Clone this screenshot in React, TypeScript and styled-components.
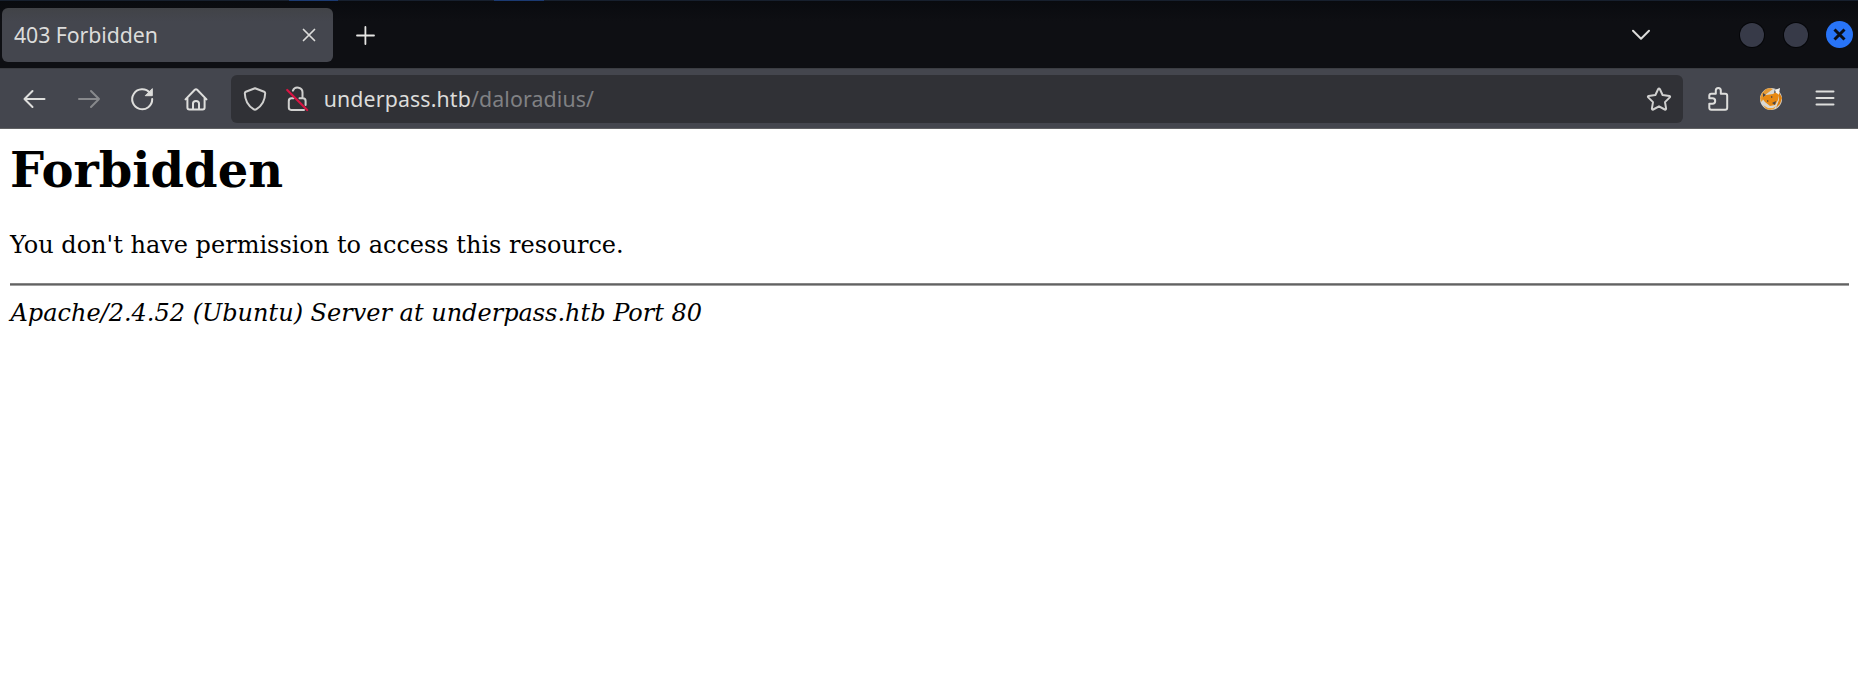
import React from 'react';
import styled, { createGlobalStyle } from 'styled-components';

const GlobalStyle = createGlobalStyle`
  * { box-sizing: border-box; }
  body { margin: 0; background: #fff; overflow: hidden; }
`;

const Window = styled.div`
  display: flex;
  flex-direction: column;
  height: 685px;
  font-family: 'Noto Sans', sans-serif;
`;

const DesktopEdge = styled.div`
  height: 1px;
  flex: none;
  background: linear-gradient(
    to right,
    #17202e 0 289px, #1b3a72 289px 338px, #17202e 338px 494px,
    #1b3a72 494px 544px, #17202e 544px 1858px
  );
`;

const TabStrip = styled.div`
  display: flex;
  align-items: center;
  height: 67px;
  flex: none;
  padding: 0 5px 0 2px;
  background: linear-gradient(#090b0f, #0e0f13 20px);
`;

const Tab = styled.div`
  display: flex;
  align-items: center;
  justify-content: space-between;
  width: 331px;
  height: 54px;
  padding: 0 11px 0 12px;
  border-radius: 6px;
  background: linear-gradient(#414347, #44464e 14px);
  color: #dcdcdb;
`;

const TabTitle = styled.span`
  font-size: 21.3px;
  line-height: 28px;
  letter-spacing: -0.08px;
`;

const Icon = styled.svg`
  display: block;
  flex: none;
  width: 26px;
  height: 26px;
  fill: none;
  stroke: currentColor;
  stroke-width: 2;
  stroke-linecap: round;
  stroke-linejoin: round;
`;

const NewTab = styled.div`
  margin-left: 19px;
  color: #e6e6e4;
`;

const WindowControls = styled.div`
  display: flex;
  align-items: center;
  margin-left: auto;
  color: #dcdcda;
`;

const Dot = styled.span`
  width: 24px;
  height: 24px;
  margin-right: 19px;
  border-radius: 50%;
  background: #373a48;
  box-shadow: 0 0 0 1px #050609;
`;

const MinimizeDot = styled(Dot)`
  margin-left: 86px;
  margin-right: 20px;
`;

const CloseButton = styled.span`
  width: 27px;
  height: 27px;
  margin-left: -1px;
  border-radius: 50%;
  background: #2874f7;
  color: #0b0e16;
`;

const Toolbar = styled.div`
  display: flex;
  align-items: center;
  height: 61px;
  flex: none;
  padding: 0 6px 0 8px;
  background: #44464e;
  border-top: 1px solid #3b3d42;
  border-bottom: 1px solid #606163;
`;

const ToolButton = styled.div<{ $dim?: boolean }>`
  display: flex;
  justify-content: center;
  width: 53.7px;
  color: ${(p) => (p.$dim ? '#88898c' : '#dededc')};
`;

const UrlBar = styled.div`
  display: flex;
  align-items: center;
  width: 1452px;
  height: 48px;
  margin: 0 8px 0 8px;
  padding: 0 11px;
  border-radius: 6px;
  background: #303136;
  color: #d0d0cf;
`;

const Lock = styled.div`
  margin-left: 16px;
`;

const Address = styled.span`
  margin-left: 14px;
  font-size: 21.3px;
  line-height: 28px;
  letter-spacing: 0.14px;
  color: #dcdcda;
`;

const Path = styled.span`
  color: #808184;
`;

const Bookmark = styled.div`
  margin-left: auto;
`;

const Page = styled.main`
  padding: 13px 9px 0 10px;
  font-family: 'DejaVu Serif', serif;
  color: #000;
`;

const Heading = styled.h1`
  margin: 0 0 32px;
  font-size: 48px;
  line-height: 56px;
`;

const Message = styled.p`
  margin: 0;
  font-size: 24px;
  line-height: 30px;
`;

const Rule = styled.hr`
  height: 3px;
  margin: 23px 0 12px;
  border: 0;
  background: linear-gradient(#858585 0 1px, #626262 1px 2px, #a0a0a0 2px);
`;

const Signature = styled.address`
  padding-left: 0.5px;
  font-size: 24px;
  line-height: 30px;
`;

const FoxIcon = () => (
  <Icon viewBox="1 0 24 26">
    <g stroke="none">
      <circle cx="13" cy="13" r="11" fill="#d9d8d3" />
      <path d="M4 7 8 3l4-1 3 1-4 3-4 3-2 5-2 2-1-4Z" fill="#e59a35" />
      <path d="M8 9 15 8l3-2 3 3-1 5-3 5-5 1-5-4-3-4Z" fill="#e88912" />
      <path d="M21 6 24 12 22 18 18 22 21 14Z" fill="#dd7f0e" />
      <path d="M5 19 10 22 15 22 18 20 16 23 12 24 8 23Z" fill="#eda33d" />
      <path d="M5 7 8 9 5 11ZM17 3l2 3-3 1ZM18 15l-1 4-3-2ZM13 10l2 1-2 1ZM9 14l2 1-2 1Z" fill="#484446" />
      <path d="M17 4 22 2 21 8 18 7Z" fill="#f4f2ed" />
    </g>
  </Icon>
);

export default function App() {
  return (
    <Window>
      <GlobalStyle />
      <DesktopEdge />
      <TabStrip>
        <Tab>
          <TabTitle>403 Forbidden</TabTitle>
          <Icon viewBox="0 0 26 26"><path d="M7.5 7.5 18.5 18.5M18.5 7.5 7.5 18.5" strokeWidth="1.7" /></Icon>
        </Tab>
        <NewTab>
          <Icon viewBox="0 0 26 26"><path d="M13.400 5v17M5 13.500h17" strokeWidth="1.8" /></Icon>
        </NewTab>
        <WindowControls>
          <Icon viewBox="0 0 26 26"><path d="m5 8.700 8 8 8-8" /></Icon>
          <MinimizeDot />
          <Dot />
          <CloseButton>
            <Icon viewBox="0 0 26 26"><path d="m8.500 8.500 10 10m0-10-10 10" strokeWidth="3" strokeLinecap="butt" /></Icon>
          </CloseButton>
        </WindowControls>
      </TabStrip>
      <Toolbar>
        <ToolButton><Icon viewBox="0 0 26 26"><path d="M22.500 13H2.500m8-8-8 8 8 8" /></Icon></ToolButton>
        <ToolButton $dim><Icon viewBox="0 0 26 26"><path d="M3 13h20m-8-8 8 8-8 8" /></Icon></ToolButton>
        <ToolButton>
          <Icon viewBox="0 0 26 26">
            <path d="M21 7A10 10 0 1 0 23.200 13" />
            <path d="M23.300 3v6.700h-6.700Z" fill="currentColor" strokeWidth="1" />
          </Icon>
        </ToolButton>
        <ToolButton>
          <Icon viewBox="0 0 26 26">
            <path d="m2.500 13.400 9.300-9.600q1.200-1.200 2.400 0l9.300 9.600M4.400 12v9.600q0 2 2 2h13.200q2 0 2-2V12M10 23.300v-5.800q0-2.500 3-2.500t3 2.500v5.800" />
          </Icon>
        </ToolButton>
        <UrlBar>
          <Icon viewBox="0 0 26 26">
            <path d="M13 2.200 22.200 5.800q1 .4 1 1.500c-.2 7-3 12.300-8.700 15.900q-1.500 1-3 0C5.800 19.600 3 14.300 2.800 7.300q0-1.100 1-1.500Z" />
          </Icon>
          <Lock>
            <Icon viewBox="0 0 26 26">
              <path d="M8.900 4.600a5 5 0 0 1 9.600 2.200V12.200M15.500 12.200h3.400q2.700 0 2.700 2.700v4M9.600 12.200H7.400Q4.800 12.200 4.800 14.900v6.700q0 2.300 2.300 2.300H20" />
              <path d="m3.200 4 20 20" stroke="#d91443" strokeWidth="2.200" />
            </Icon>
          </Lock>
          <Address>underpass.htb<Path>/daloradius/</Path></Address>
          <Bookmark>
            <Icon viewBox="0 0 26 26">
              <path d="M12.200 3q.8-1.200 1.600 0l2.800 6 6.800 1q1.200.4.4 1.400l-4.800 4.700 1.100 6.500q0 1.400-1.300.9L13 20.300l-5.800 3.200q-1.300.5-1.300-.9L7 16.100l-4.800-4.700q-.8-1 .4-1.400l6.800-1Z" />
            </Icon>
          </Bookmark>
        </UrlBar>
        <ToolButton>
          <Icon viewBox="0 0 26 26">
            <path d="M10.800 7.800V4.500a2.500 2.500 0 0 1 5 0v3.300h4.400q2 0 2 2v11.900q0 2-2 2H6.300q-2 0-2-2v-4h3.200a2.700 2.700 0 0 0 0-5.400H4.300V9.800q0-2 2-2Z" />
          </Icon>
        </ToolButton>
        <ToolButton><FoxIcon /></ToolButton>
        <ToolButton><Icon viewBox="0 0 26 26"><path d="M4.500 5.500h17M4.500 12h17M4.500 18.500h17" /></Icon></ToolButton>
      </Toolbar>
      <Page>
        <Heading>Forbidden</Heading>
        <Message>You don't have permission to access this resource.</Message>
        <Rule />
        <Signature>Apache/2.4.52 (Ubuntu) Server at underpass.htb Port 80</Signature>
      </Page>
    </Window>
  );
}
